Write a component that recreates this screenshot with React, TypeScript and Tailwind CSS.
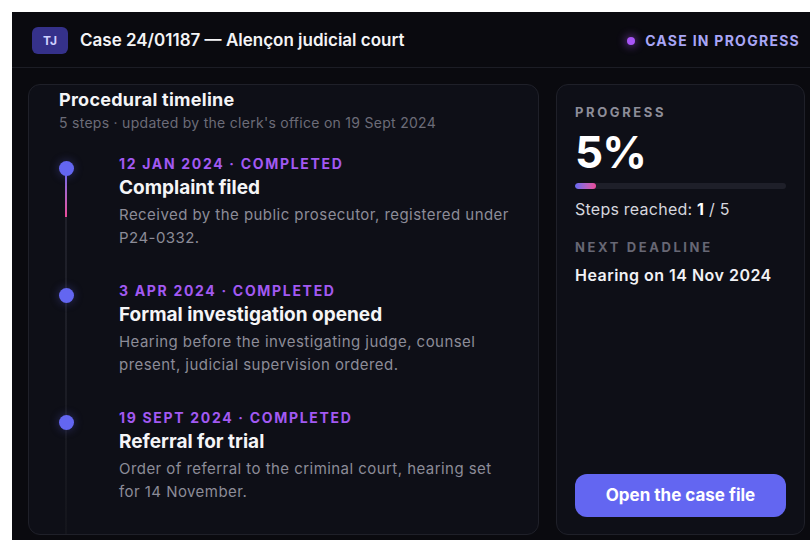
import React from 'react'

type Step = {
  date: string
  title: string
  text: string
}

const steps: Step[] = [
  {
    date: '12 Jan 2024',
    title: 'Complaint filed',
    text: 'Received by the public prosecutor, registered under P24-0332.',
  },
  {
    date: '3 Apr 2024',
    title: 'Formal investigation opened',
    text: 'Hearing before the investigating judge, counsel present, judicial supervision ordered.',
  },
  {
    date: '19 Sept 2024',
    title: 'Referral for trial',
    text: 'Order of referral to the criminal court, hearing set for 14 November.',
  },
]

function Timeline() {
  return (
    <div className="relative flex-1 mt-[23px]">
      {/* track */}
      <div className="absolute left-[6px] top-[14px] bottom-0 w-[2px] bg-gradient-to-b from-[#20212b] via-[#1d1e27] to-[#14151c]" />
      <div className="absolute left-[6px] top-[14px] h-[48px] w-[2px] bg-gradient-to-b from-[#6366f1] to-[#ec4899]" />

      <div className="flex flex-col gap-[33px]">
        {steps.map((s) => (
          <div key={s.title} className="flex">
            <div className="w-[60px] shrink-0">
              <div className="relative mt-[6px] h-[15px] w-[15px] rounded-full bg-[#6366f1] shadow-[0_0_10px_rgba(99,102,241,0.35)]" />
            </div>
            <div>
              <div className="text-[14px] leading-[18px] font-bold uppercase tracking-[0.12em] text-[#a259f2]">
                {s.date} · Completed
              </div>
              <div className="mt-[2px] text-[19px] leading-[26px] font-bold text-[#f5f5f7]">
                {s.title}
              </div>
              <p className="mt-[2px] text-[15px] leading-[23px] tracking-[0.03em] text-[#8c8c98]">
                {s.text}
              </p>
            </div>
          </div>
        ))}
      </div>
    </div>
  )
}

export default function App() {
  return (
    <div
      className="w-[810px] h-[540px] overflow-hidden bg-white pl-3 pt-3"
      style={{ fontFamily: 'Inter, "Noto Sans", sans-serif' }}
    >
      <div className="w-[808px] h-[540px] bg-[#0a0a0f] flex flex-col">
        {/* Header */}
        <header className="h-14 shrink-0 px-5 pt-[2px] flex items-center justify-between border-b border-[#1c1d25]">
          <div className="flex items-center gap-3">
            <span className="flex h-[27px] w-[36px] items-center justify-center rounded-md bg-[#35318a] text-[12px] font-bold text-[#cfd0ff]">
              TJ
            </span>
            <h1 className="text-[17px] font-semibold text-[#f4f4f6]">
              Case 24/01187 — Alençon judicial court
            </h1>
          </div>
          <div className="flex items-center gap-[10px]">
            <span className="h-[8px] w-[8px] rounded-full bg-[#a855f7] shadow-[0_0_8px_2px_rgba(168,85,247,0.45)]" />
            <span className="text-[14px] font-bold uppercase tracking-[0.09em] text-[#a9a6f6]">
              Case in progress
            </span>
          </div>
        </header>

        {/* Body */}
        <div className="flex gap-[17px] px-4 pt-4">
          <section className="w-[511px] h-[451px] shrink-0 rounded-xl border border-[#1f2029] bg-[#0e0f17] pl-[30px] pr-[26px] pt-[3px] flex flex-col overflow-hidden">
            <h2 className="text-[18px] leading-[24px] font-bold tracking-[0.015em] text-[#f4f4f6]">
              Procedural timeline
            </h2>
            <p className="mt-[2px] text-[14px] leading-[18px] tracking-[0.02em] text-[#6c6c78]">
              5 steps · updated by the clerk's office on 19 Sept 2024
            </p>
            <Timeline />
          </section>

          <aside className="w-[249px] h-[451px] shrink-0 rounded-xl border border-[#1f2029] bg-[#0e0f17] px-[18px] pt-[18px] pb-[17px] flex flex-col">
            <div className="text-[13px] leading-[18px] font-bold uppercase tracking-[0.2em] text-[#8d8d99]">
              Progress
            </div>
            <div className="mt-[7px] text-[44px] leading-[48px] font-bold tracking-[-0.02em] text-white">
              5%
            </div>
            <div className="mt-[7px] h-[6px] w-full rounded-full bg-[#1e1f29] overflow-hidden">
              <div className="h-full w-[21px] rounded-full bg-gradient-to-r from-[#6366f1] to-[#ec4899]" />
            </div>
            <div className="mt-[9px] text-[16px] leading-[22px] tracking-[0.015em] text-[#d6d6de]">
              Steps reached: <span className="font-bold text-white">1</span> / 5
            </div>
            <div className="mt-[18px] text-[13px] leading-[18px] font-bold uppercase tracking-[0.2em] text-[#676774]">
              Next deadline
            </div>
            <div className="mt-[8px] text-[16px] leading-[22px] font-semibold tracking-[0.03em] text-[#f2f2f5]">
              Hearing on 14 Nov 2024
            </div>
            <button className="mt-auto h-[43px] w-full rounded-xl bg-[#6366f1] text-[17px] font-bold text-white">
              Open the case file
            </button>
          </aside>
        </div>
      </div>
    </div>
  )
}
